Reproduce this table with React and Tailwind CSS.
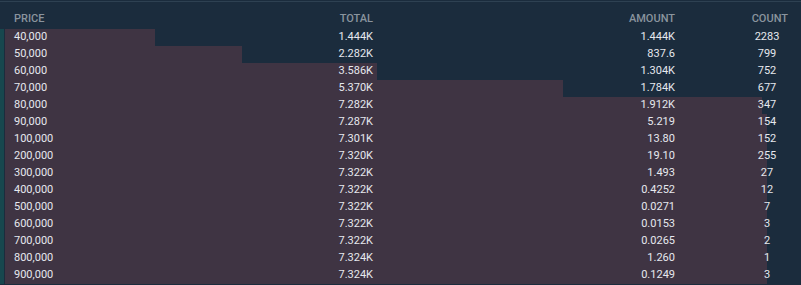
import React from 'react';

const rows = [
  { price: '40,000', total: '1.444K', amount: '1.444K', count: '2283', bar: 150 },
  { price: '50,000', total: '2.282K', amount: '837.6', count: '799', bar: 237 },
  { price: '60,000', total: '3.586K', amount: '1.304K', count: '752', bar: 372 },
  { price: '70,000', total: '5.370K', amount: '1.784K', count: '677', bar: 558 },
  { price: '80,000', total: '7.282K', amount: '1.912K', count: '347', bar: 757 },
  { price: '90,000', total: '7.287K', amount: '5.219', count: '154', bar: 762 },
  { price: '100,000', total: '7.301K', amount: '13.80', count: '152', bar: 762 },
  { price: '200,000', total: '7.320K', amount: '19.10', count: '255', bar: 762 },
  { price: '300,000', total: '7.322K', amount: '1.493', count: '27', bar: 762 },
  { price: '400,000', total: '7.322K', amount: '0.4252', count: '12', bar: 762 },
  { price: '500,000', total: '7.322K', amount: '0.0271', count: '7', bar: 762 },
  { price: '600,000', total: '7.322K', amount: '0.0153', count: '3', bar: 762 },
  { price: '700,000', total: '7.322K', amount: '0.0265', count: '2', bar: 762 },
  { price: '800,000', total: '7.324K', amount: '1.260', count: '1', bar: 762 },
  { price: '900,000', total: '7.324K', amount: '0.1249', count: '3', bar: 762 },
];

const BookRow = ({ row }) => {
  return (
    <div className="relative flex h-[17px] items-center text-[11px] leading-[17px] text-[#e6e8ee]">
      {/* depth bar */}
      <div
        className="absolute left-[5px] top-0 h-full bg-[#3f3443]"
        style={{ width: row.bar }}
      />
      <div className="relative w-[180px] pl-[14px] pb-[3px]">{row.price}</div>
      <div className="relative w-[193px] text-right pb-[3px]">{row.total}</div>
      <div className="relative w-[302px] text-right pb-[3px]">{row.amount}</div>
      <div className="relative ml-[71px] w-[42px] text-center pb-[3px]">{row.count}</div>
    </div>
  );
};

const App = () => {
  return (
    <div
      className="h-[285px] w-[801px] overflow-hidden bg-[#1b2c3d]"
      style={{ fontFamily: 'Roboto, "Liberation Sans", sans-serif' }}
    >
      <div className="mt-px h-px bg-[#2e4152]" />

      {/* Header */}
      <div className="flex h-[27px] items-end pb-[4px] text-[11px] font-medium uppercase leading-[13px] text-[#8a949e]">
        <div className="w-[180px] pl-[14px]">Price</div>
        <div className="w-[193px] text-right">Total</div>
        <div className="w-[302px] text-right">Amount</div>
        <div className="ml-[71px] w-[42px] text-right">Count</div>
      </div>

      {/* Rows */}
      <div className="relative">
        <div className="absolute left-0 top-0 h-full w-[4px] bg-[#17474e]" />
        {rows.map((row) => (
          <BookRow key={row.price} row={row} />
        ))}
      </div>
    </div>
  );
};

export default App;
